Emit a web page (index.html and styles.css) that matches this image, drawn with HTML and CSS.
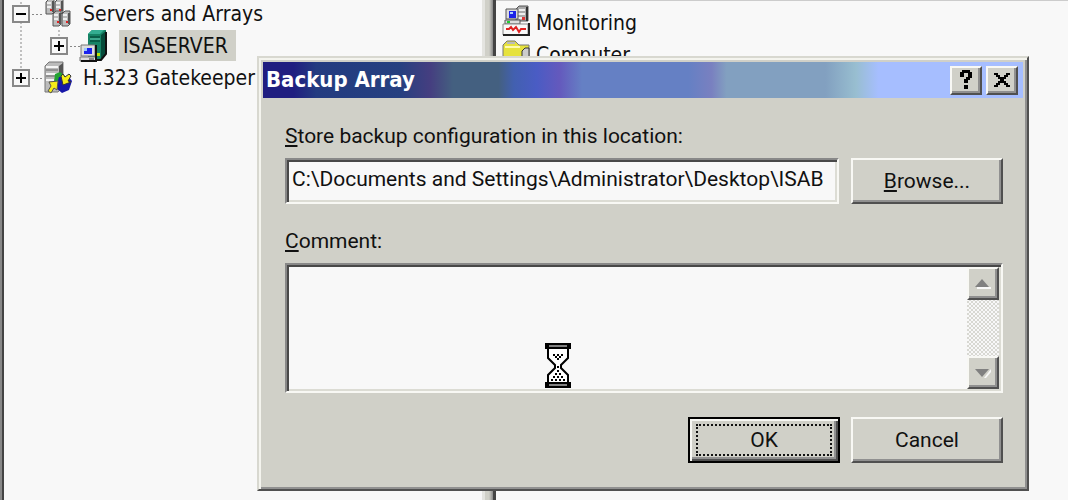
FILE: index.html
```html
<!DOCTYPE html>
<html lang="en">
<head>
<meta charset="utf-8">
<title>Backup Array</title>
<link rel="stylesheet" href="styles.css">
</head>
<body>
<main class="console">
  <nav class="tree-pane" aria-label="Console tree">
    <ul class="tree">
      <li class="tree-row">
        <svg class="branch" width="40" height="32" viewBox="0 0 40 32">
          <path class="guide" d="M17 0V32M28 16.500H39"/>
          <path class="box" d="M9 8h16v16H9z"/><path class="sign" d="M12 16h10"/>
        </svg>
        <svg class="icon" width="28" height="32" viewBox="0 0 28 32">
          <g stroke="#555" stroke-width="1">
            <path d="M2 4l3-3h5v13l-2 2H2zM11 4l3-3h5v13l-2 2h-6z" fill="#bbb"/>
            <path d="M9 16l3-3h5v13l-2 2H9zM18 16l3-3h5v13l-2 2h-6z" fill="#bbb"/>
          </g>
          <path d="M3 5h4M3 9h4M12 5h4M12 9h4M10 17h4M10 21h4M19 17h4M19 21h4" stroke="#eee" stroke-width="2"/>
          <path d="M9 3v11M18 3v10M16 15v11M25 15v11" stroke="#555" stroke-width="2"/>
          <path d="M6 11h2v2H6zM15 11h2v2h-2zM13 23h2v2h-2zM22 23h2v2h-2z" fill="#d22"/>
        </svg>
        <span class="node">Servers and Arrays</span>
      </li>
      <li class="tree-row">
        <svg class="branch" width="76" height="32" viewBox="0 0 76 32">
          <path class="guide" d="M17 0V32M55 0V8M66 16.500H76"/>
          <path class="box" d="M47 8h16v16H47z"/><path class="sign" d="M50 16h10M55 11v10"/>
        </svg>
        <svg class="icon" width="28" height="32" viewBox="0 0 28 32">
          <path d="M8 4l4-4h14v24l-5 5H8z" fill="#168365"/>
          <path d="M8 4l4-4h12l-4 4z" fill="#34ad91"/>
          <path d="M21 5l5-4v23l-5 5z" fill="#064b3a"/>
          <path d="M10 7h10M10 11h10" stroke="#0a5e48" stroke-width="2"/>
          <path d="M10 9h10" stroke="#65cdb5"/>
          <path d="M26 2v22l-5 6H10" fill="none" stroke="#111" stroke-width="2"/>
          <path d="M16 23h4v3h-4z" fill="#b9e500"/>
          <path d="M1 15h14v11H1zM0 27h16v4H0z" fill="#ddd" stroke="#777"/>
          <path d="M4 18h8v6H4z" fill="#1a23ed"/><path d="M4 18h3v3H4z" fill="#99c8ff"/>
          <path d="M16 15v16H1" fill="none" stroke="#111" stroke-width="2"/>
          <path d="M9 28h5v2H9z" fill="#888"/>
        </svg>
        <span class="node node-selected">ISASERVER</span>
      </li>
      <li class="tree-row">
        <svg class="branch" width="40" height="32" viewBox="0 0 40 32">
          <path class="guide" d="M17 0V8M28 16.500H39"/>
          <path class="box" d="M9 8h16v16H9z"/><path class="sign" d="M12 16h10M17 11v10"/>
        </svg>
        <svg class="icon" width="28" height="32" viewBox="0 0 28 32">
          <path d="M1 4l4-4h14v24l-5 6H1z" fill="#bbb" stroke="#777"/>
          <path d="M2 5h12M2 12h12M2 18h8" stroke="#f5f5f5" stroke-width="2"/>
          <path d="M2 8h12M2 14h12" stroke="#666"/>
          <path d="M15 4l4-3v12h-4z" fill="#555"/>
          <path d="M11 12l5-2 5 4-4 6h-7z" fill="#23a332"/>
          <path d="M15 15h10l3 4-3 9-7 3-6-5z" fill="#1717a8"/>
          <path d="M19 12l2 3 4-3 2 2-3 5 3 1-8 3-2-9z" fill="#f5ed18" stroke="#333" stroke-width="1"/>
          <path d="M5 20l9-1-1 9-3-2-3 5-3-2 3-5z" fill="#f5ed18" stroke="#555" stroke-width="1"/>
        </svg>
        <span class="node">H.323 Gatekeeper</span>
      </li>
    </ul>
  </nav>
  <div class="splitter"></div>
  <section class="detail-pane" aria-label="Details">
    <ul class="list">
      <li class="list-row">
        <svg class="icon" width="28" height="32" viewBox="0 0 28 32">
          <path d="M14 2l3-3h9v15H14z" fill="#aaa" stroke="#555"/>
          <path d="M16 3h7M16 7h7M16 11h6" stroke="#eee" stroke-width="2"/>
          <path d="M25 0v14" stroke="#333" stroke-width="2"/>
          <path d="M20 10h3v3h-3z" fill="#d33"/>
          <path d="M4 2h12v10H4zM3 13h15v4H3z" fill="#ddd" stroke="#555"/>
          <path d="M7 4h7v7H7z" fill="#1b23e8"/><path d="M8 5h3v2H8z" fill="#aacfff"/>
          <path d="M5 14h3v2H5z" fill="#2c3"/>
          <path d="M1 17h25v11H1z" fill="#f8f8f8" stroke="#888"/>
          <path d="M27 16v12H1" fill="none" stroke="#222" stroke-width="2"/>
          <path d="M4 22h3l2-2 2 3 3-3 3 5 2-3h5" fill="none" stroke="#e02020" stroke-width="2"/>
        </svg>
        <span>Monitoring</span>
      </li>
      <li class="list-row">
        <svg class="icon" width="28" height="32" viewBox="0 0 28 32">
          <path d="M1 29V6l4-4h8l4 4h10v23z" fill="#e6e23c" stroke="#777"/>
          <path d="M5 4h8" stroke="#bbb" stroke-width="2"/>
          <path d="M3 8h15" stroke="#fffbb0" stroke-width="2"/>
          <path d="M20 12l3-3h4v20h-7z" fill="#ccc" stroke="#333"/>
        </svg>
        <span>Computer</span>
      </li>
    </ul>
  </section>
</main>

<form class="dialog" role="dialog" aria-labelledby="dialog-title">
  <header class="titlebar">
    <h1 class="title" id="dialog-title">Backup Array</h1>
    <button class="button caption-button" type="button" aria-label="Help">
      <svg width="16" height="20" viewBox="0 0 16 20"><path d="M2 2h2V0h8v2h2v6h-2v2h-2v3H6V9h2V7h2V3H6v4H2zM6 15h4v4H6z"/></svg>
    </button>
    <button class="button caption-button" type="button" aria-label="Close">
      <svg width="18" height="16" viewBox="0 0 18 16"><path d="M1 1h4v2h2v2h4V3h2V1h4v2h-2v2h-2v2h-2v2h2v2h2v2h2v2h-4v-2h-2v-2H7v2H5v2H1v-2h2v-2h2V9h2V7H5V5H3V3H1z"/></svg>
    </button>
  </header>
  <div class="content">
    <label class="label" for="location"><u>S</u>tore backup configuration in this location:</label>
    <div class="location-row">
      <input class="sunken text-input" id="location" type="text" value="C:\Documents and Settings\Administrator\Desktop\ISAB">
      <button class="button push" type="button"><span><u>B</u>rowse...</span></button>
    </div>
    <label class="label comment-label" for="comment"><u>C</u>omment:</label>
    <div class="sunken comment-box">
      <textarea class="comment" id="comment"></textarea>
      <div class="scrollbar">
        <button class="button scroll-button" type="button" aria-label="Scroll up">
          <svg width="18" height="12" viewBox="0 0 18 12"><path d="M3 9h14v2H3z" fill="#f8f8f8"/><path d="M1 9l7-8 7 8z" fill="#808080"/></svg>
        </button>
        <button class="button scroll-button" type="button" aria-label="Scroll down">
          <svg width="18" height="12" viewBox="0 0 18 12"><path d="M10 11l7-9v3l-5 6z" fill="#f8f8f8"/><path d="M1 2h14L8 10z" fill="#808080"/></svg>
        </button>
      </div>
    </div>
    <div class="actions">
      <button class="button push default" type="submit"><span class="focus">OK</span></button>
      <button class="button push" type="button"><span>Cancel</span></button>
    </div>
  </div>
</form>

<svg class="wait-cursor" width="28" height="46" viewBox="0 0 28 46">
  <path d="M4 5h20v10l-7 7v3l7 7v8H4v-8l7-7v-3l-7-7z" fill="#fff" stroke="#000" stroke-width="2"/>
  <path d="M1 0h26v6H1zM1 39h26v6H1z" fill="#000"/>
  <path d="M5 3h18M5 42h18" stroke="#fff" stroke-width="1"/>
  <path d="M9 12h2m2 0h2m2 0h2M11 14h2m2 0h2M13 16h2M13 24h2M13 28h2M11 31h2m2 0h2M9 34h2m2 0h2m2 0h2M7 37h2m2 0h2m2 0h2m2 0h2" stroke="#000" stroke-width="2"/>
</svg>
</body>
</html>
```
FILE: styles.css
```css
* {
  box-sizing: border-box;
}

body {
  margin: 0;
  height: 100vh;
  overflow: hidden;
  background: #f8f8f8;
  color: #111;
  font: 21px/32px Roboto, "Liberation Sans", sans-serif;
}

.console {
  display: grid;
  grid-template-columns: minmax(0, 482fr) 14px minmax(0, 572fr);
  height: 100%;
  overflow: hidden;
}

.tree-pane {
  border-left: 2px solid #888;
  box-shadow: inset 2px 0 #444;
  padding-left: 2px;
}

.splitter {
  border-left: 3px solid #e4e4e0;
  border-right: 3px solid #444;
  background: linear-gradient(to right, #d0d0c8 4px, #888 8px);
}

.tree,
.list {
  margin: 0;
  padding: 0;
  list-style: none;
  font: 21px/32px "DejaVu Sans Condensed", Tahoma, sans-serif;
  white-space: nowrap;
}

.tree {
  margin-top: -2px;
}

.tree-row,
.list-row {
  display: flex;
  height: 32px;
}

.branch,
.icon {
  flex: none;
  overflow: visible;
}

.guide {
  fill: none;
  stroke: #888;
  stroke-dasharray: 2 2;
}

.box {
  fill: #f8f8f8;
  stroke: #888;
  stroke-width: 2;
}

.sign {
  stroke: #000;
  stroke-width: 2;
}

.node {
  padding: 0 4px;
  margin-left: 7px;
}

.node-selected {
  height: 31px;
  margin-left: 11px;
  padding: 0 8px 0 4px;
  background: #d0d0c8;
}

.detail-pane {
  padding: 6px;
  border-top: 1px solid #ccc;
}

.list-row {
  gap: 6px;
}

.dialog {
  position: absolute;
  top: 56px;
  left: 257px;
  right: 39px;
  padding: 2px;
  border: 2px solid;
  border-color: #d8d8d0 #505050 #505050 #d8d8d0;
  box-shadow: inset 2px 2px #f4f4ee, inset -2px -2px #909090;
  background: #d0d0c8;
}

.titlebar {
  display: flex;
  align-items: center;
  height: 36px;
  margin: 2px 2px 0;
  padding: 0 5px 0 3px;
  background: linear-gradient(to right, #201e80 0, #201e80 4%, #233b80 7%, #264080 18%, #453e80 22%, #446080 25%, #446080 31%, #4260b0 33%, #4a5cc4 36%, #6459bd 39%, #6580c4 42%, #6580c4 56%, #7980c0 59%, #82a0c0 61%, #82a0c0 74%, #98bed0 78%, #a6beff 81%);
}

.title {
  flex: 1;
  margin: 0;
  color: #fff;
  font: bold 22px/36px "DejaVu Sans Condensed", Tahoma, sans-serif;
}

.button {
  display: flex;
  align-items: center;
  justify-content: center;
  padding: 0;
  border: 2px solid;
  border-color: #f8f8f4 #505050 #505050 #f8f8f4;
  box-shadow: inset -2px -2px #909090;
  background: #d0d0c8;
  color: #111;
  font: inherit;
}

.caption-button {
  width: 32px;
  height: 29px;
}

.caption-button + .caption-button {
  margin-left: 4px;
}

.content {
  display: flex;
  flex-direction: column;
  padding: 22px 22px 24px 24px;
}

.label {
  line-height: 32px;
}

.location-row {
  display: flex;
  gap: 12px;
  margin-top: 6px;
}

.sunken {
  border: 2px solid;
  border-color: #888 #f8f8f4 #f8f8f4 #888;
  box-shadow: inset 2px 2px #484848, inset -2px -2px #dcdcd4;
  background: #f8f8f8;
}

.text-input {
  flex: 1;
  min-width: 0;
  height: 46px;
  padding: 0 4px 4px 5px;
  border-radius: 0;
  color: #111;
  font: inherit;
}

.push {
  width: 152px;
  height: 46px;
}

.comment-label {
  margin-top: 21px;
}

.comment-box {
  display: flex;
  height: 130px;
  margin-top: 6px;
  padding: 2px;
}

.comment {
  flex: 1;
  min-width: 0;
  padding: 2px 4px;
  border: 0;
  outline: 0;
  resize: none;
  background: transparent;
  font: inherit;
}

.scrollbar {
  display: flex;
  flex-direction: column;
  justify-content: space-between;
  width: 32px;
  background: repeating-conic-gradient(#d8d8d2 0 25%, #f8f8f8 0 50%) 0 0 / 4px 4px;
}

.scroll-button {
  height: 33px;
}

.actions {
  display: flex;
  justify-content: flex-end;
  gap: 11px;
  margin-top: 24px;
}

.default {
  padding: 2px;
  border-color: #000;
  box-shadow: inset 2px 2px #f8f8f4, inset -2px -2px #505050, inset -4px -4px #909090;
}

.focus {
  width: 136px;
  height: 32px;
  border: 2px dotted #111;
  line-height: 28px;
}

.wait-cursor {
  position: absolute;
  top: 343px;
  left: 544px;
}
```
